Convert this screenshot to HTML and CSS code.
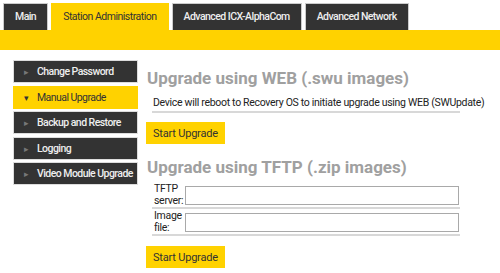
FILE: index.html
```html
<!DOCTYPE html>
<html lang="en">
<head>
  <meta charset="UTF-8">
  <title>Station Administration</title>
  <link rel="stylesheet" href="styles.css">
</head>
<body>
  <div class="tabs">
    <a class="tab">Main</a>
    <a class="tab active">Station Administration</a>
    <a class="tab">Advanced ICX-AlphaCom</a>
    <a class="tab">Advanced Network</a>
  </div>
  <div class="subbar"></div>
  <div class="page">
    <ul class="menu">
      <li><span class="arrow">&#9656;</span>Change Password</li>
      <li class="current"><span class="arrow">&#9662;</span>Manual Upgrade</li>
      <li><span class="arrow">&#9656;</span>Backup and Restore</li>
      <li><span class="arrow">&#9656;</span>Logging</li>
      <li><span class="arrow">&#9656;</span>Video Module Upgrade</li>
    </ul>
    <div class="content">
      <h2>Upgrade using WEB (.swu images)</h2>
      <div class="row note">Device will reboot to Recovery OS to initiate upgrade using WEB (SWUpdate)</div>
      <button class="btn">Start Upgrade</button>
      <h2>Upgrade using TFTP (.zip images)</h2>
      <div class="row field">
        <label for="tftp">TFTP server:</label>
        <input type="text" id="tftp">
      </div>
      <div class="row field">
        <label for="image">Image file:</label>
        <input type="text" id="image">
      </div>
      <button class="btn">Start Upgrade</button>
    </div>
  </div>
</body>
</html>
```

FILE: styles.css
```css
body { margin: 0; font-family: Roboto, sans-serif; color: #222; background: #fff; }
.tabs { display: flex; gap: 3px; padding: 3px 0 0 3px; }
.tab { display: block; height: 26px; line-height: 26px; padding: 0 11px; background: #333; color: #eee; border: 1px solid #ccc; border-bottom: none; font-size: 10.5px; font-weight: 500; letter-spacing: -0.55px; }
.tab.active { background: #ffd200; color: #333; border-color: #ffd200; font-weight: 400; letter-spacing: -0.5px; }
.subbar { height: 20px; background: #ffd200; }
.page { display: flex; gap: 8px; padding: 10px 13px 0; }
.menu { list-style: none; margin: 0; padding: 0; width: 125px; display: flex; flex-direction: column; gap: 2.5px; }
.menu li { height: 23px; line-height: 21px; background: #333; color: #eee; font-size: 10.5px; font-weight: 500; letter-spacing: -0.55px; border: 1px solid #ddd; box-sizing: border-box; padding-left: 10px; white-space: nowrap; }
.menu li.current { background: #ffd200; color: #333; border-color: #ffd200; font-weight: 400; }
.arrow { display: inline-block; width: 13px; font-size: 9px; color: #777; }
.current .arrow { color: #333; }
.content { width: 314px; }
h2 { margin: 8px 0 5px 1px; font-size: 17px; line-height: 20px; color: #a0a0a0; }
.row { margin-left: 6px; border-bottom: 2px solid #d8d8d8; font-size: 10.5px; letter-spacing: -0.3px; }
.note { padding: 3px 0 2px 1px; line-height: 13px; white-space: nowrap; }
.btn { display: block; margin: 9px 0 13px 0; height: 22px; padding: 0 7px; background: #ffd200; border: none; font-family: inherit; font-size: 11px; letter-spacing: -0.2px; color: #333; }
.field { display: flex; align-items: center; gap: 2px; padding: 1px 0 0 2px; }
.field label { width: 29px; line-height: 12px; }
.field input { flex: 1; height: 15px; margin: 0 1px 0 0; border: 1px solid #a9a9a9; padding: 1px 2px; }
.field + .btn { margin-top: 10px; }
```
